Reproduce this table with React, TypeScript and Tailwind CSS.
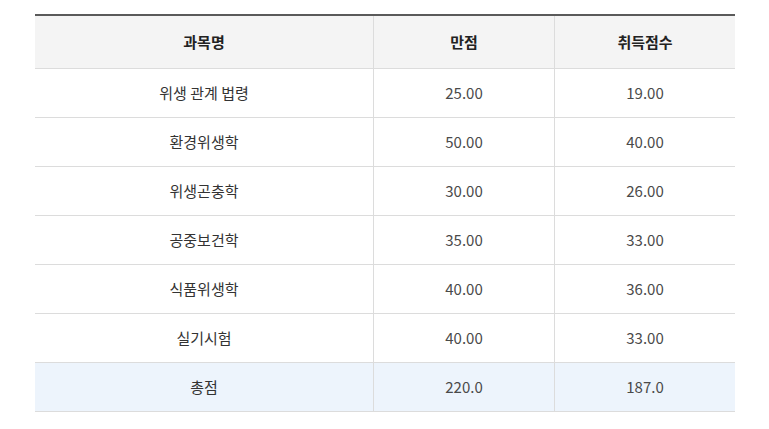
const rows = [
  { name: '위생 관계 법령', full: '25.00', got: '19.00' },
  { name: '환경위생학', full: '50.00', got: '40.00' },
  { name: '위생곤충학', full: '30.00', got: '26.00' },
  { name: '공중보건학', full: '35.00', got: '33.00' },
  { name: '식품위생학', full: '40.00', got: '36.00' },
  { name: '실기시험', full: '40.00', got: '33.00' },
];

const font = { fontFamily: '"Noto Sans CJK KR", "Noto Sans", sans-serif' };

const Cell = ({ children, first }: { children: React.ReactNode; first?: boolean }) => (
  <div
    className={
      'flex items-center justify-center ' + (first ? '' : 'border-l border-[#dcdcdc]')
    }
  >
    {children}
  </div>
);

export default function App() {
  return (
    <div className="min-h-[429px] bg-white pt-[14px] pl-[35px]" style={font}>
      <div className="w-[700px] border-t-2 border-[#5a5a5a] text-[15px] text-[#4a4a4a]">
        {/* Header */}
        <div className="grid h-[53px] grid-cols-[338px_181px_181px] border-b border-[#dcdcdc] bg-[#f4f4f4] font-bold text-[#222]">
          <Cell first>과목명</Cell>
          <Cell>만점</Cell>
          <Cell>취득점수</Cell>
        </div>

        {rows.map((r) => (
          <div
            key={r.name}
            className="grid h-[49px] grid-cols-[338px_181px_181px] border-b border-[#dcdcdc]"
          >
            <Cell first>
              <span className="text-[#333]">{r.name}</span>
            </Cell>
            <Cell>{r.full}</Cell>
            <Cell>{r.got}</Cell>
          </div>
        ))}

        {/* Total */}
        <div className="grid h-[49px] grid-cols-[338px_181px_181px] border-b border-[#dcdcdc] bg-[#edf4fc]">
          <Cell first>
            <span className="text-[#333]">총점</span>
          </Cell>
          <Cell>220.0</Cell>
          <Cell>187.0</Cell>
        </div>
      </div>
    </div>
  );
}
